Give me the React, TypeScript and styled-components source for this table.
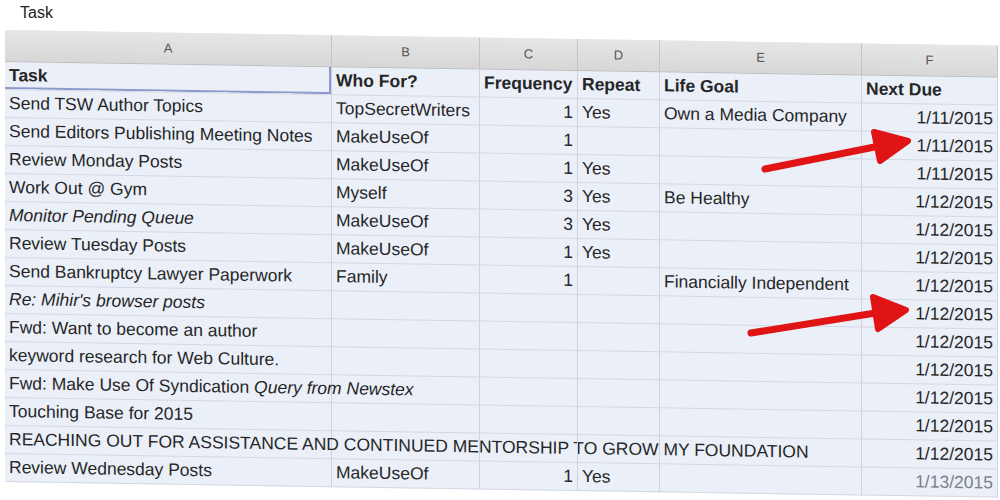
import styled, { createGlobalStyle } from "styled-components";

const GlobalStyle = createGlobalStyle`
  html, body {
    margin: 0;
    background: #fff;
  }
  body {
    font-family: "Liberation Sans", Arial, sans-serif;
    color: #222;
  }
`;

const Page = styled.div`
  position: relative;
  width: 1000px;
  height: 500px;
  overflow: hidden;
  background: #fff;
`;

const FormulaBar = styled.div`
  height: 30px;
  padding-left: 20px;
  font-size: 16px;
  line-height: 25px;
  color: #222;
`;

const Sheet = styled.div`
  margin-left: 5px;
  width: 993px;
  display: grid;
  grid-template-columns: 327px 148px 98px 82px 202px 136px;
  grid-template-rows: 32px;
  grid-auto-rows: 28px;
  background: #eaeff8;
  transform: skewY(0.9deg);
  transform-origin: 0 0;
`;

const ColHead = styled.div`
  display: flex;
  align-items: center;
  justify-content: center;
  font-size: 13px;
  color: #555;
  background: linear-gradient(#e6e6e6, #d7d7d7);
  border-right: 1px solid #c4c4c4;
  border-bottom: 1px solid #bdbdbd;
`;

type CellProps = {
  $align?: "left" | "right";
  $bold?: boolean;
  $italic?: boolean;
  $faded?: boolean;
  $selected?: boolean;
};

const Cell = styled.div<CellProps>`
  display: flex;
  align-items: center;
  justify-content: ${(p) => (p.$align === "right" ? "flex-end" : "flex-start")};
  padding: 0 4px 1px 4px;
  font-size: 17.5px;
  line-height: 1.05;
  font-weight: ${(p) => (p.$bold ? 700 : 400)};
  font-style: ${(p) => (p.$italic ? "italic" : "normal")};
  color: ${(p) => (p.$faded ? "#7b7f88" : "#262626")};
  white-space: nowrap;
  overflow: visible;
  border-right: 1px solid #cdd2dc;
  border-bottom: 1px solid #d3d8e2;
  box-shadow: ${(p) =>
    p.$selected ? "inset -2px -2px 0 #8a9bcb" : "none"};
`;

const Slant = styled.span`
  font-style: italic;
`;

const Arrows = styled.svg`
  position: absolute;
  top: 0;
  left: 0;
  pointer-events: none;
`;

type Row = {
  task: React.ReactNode;
  who?: string;
  freq?: string;
  repeat?: string;
  goal?: string;
  due: string;
  italic?: boolean;
  faded?: boolean;
};

const rows: Row[] = [
  { task: "Send TSW Author Topics", who: "TopSecretWriters", freq: "1", repeat: "Yes", goal: "Own a Media Company", due: "1/11/2015" },
  { task: "Send Editors Publishing Meeting Notes", who: "MakeUseOf", freq: "1", due: "1/11/2015" },
  { task: "Review Monday Posts", who: "MakeUseOf", freq: "1", repeat: "Yes", due: "1/11/2015" },
  { task: "Work Out @ Gym", who: "Myself", freq: "3", repeat: "Yes", goal: "Be Healthy", due: "1/12/2015" },
  { task: "Monitor Pending Queue", who: "MakeUseOf", freq: "3", repeat: "Yes", due: "1/12/2015", italic: true },
  { task: "Review Tuesday Posts", who: "MakeUseOf", freq: "1", repeat: "Yes", due: "1/12/2015" },
  { task: "Send Bankruptcy Lawyer Paperwork", who: "Family", freq: "1", goal: "Financially Independent", due: "1/12/2015" },
  { task: "Re: Mihir's browser posts", due: "1/12/2015", italic: true },
  { task: "Fwd: Want to become an author", due: "1/12/2015" },
  { task: "keyword research for Web Culture.", due: "1/12/2015" },
  {
    task: (
      <span>
        Fwd: Make Use Of Syndication <Slant>Query from Newstex</Slant>
      </span>
    ),
    due: "1/12/2015",
  },
  { task: "Touching Base for 2015", due: "1/12/2015" },
  { task: "REACHING OUT FOR ASSISTANCE AND CONTINUED MENTORSHIP TO GROW MY FOUNDATION", due: "1/12/2015" },
  { task: "Review Wednesday Posts", who: "MakeUseOf", freq: "1", repeat: "Yes", due: "1/13/2015", faded: true },
];

const letters = ["A", "B", "C", "D", "E", "F"];

const RedArrow = ({ from, tip, top, bottom }: { from: [number, number]; tip: [number, number]; top: [number, number]; bottom: [number, number] }) => {
  const base: [number, number] = [(top[0] + bottom[0]) / 2, (top[1] + bottom[1]) / 2];
  return (
    <g stroke="#e01414" strokeLinecap="round" strokeLinejoin="round">
      <line x1={from[0]} y1={from[1]} x2={base[0]} y2={base[1]} strokeWidth={7} />
      <polygon
        points={`${top[0]},${top[1]} ${tip[0]},${tip[1]} ${bottom[0]},${bottom[1]}`}
        fill="#e01414"
        strokeWidth={6}
      />
    </g>
  );
};

export default function App() {
  return (
    <Page>
      <GlobalStyle />
      <FormulaBar>Task</FormulaBar>
      <Sheet>
        {letters.map((l) => (
          <ColHead key={l}>{l}</ColHead>
        ))}
        <Cell $bold $selected>Task</Cell>
        <Cell $bold>Who For?</Cell>
        <Cell $bold>Frequency</Cell>
        <Cell $bold>Repeat</Cell>
        <Cell $bold>Life Goal</Cell>
        <Cell $bold>Next Due</Cell>
        {rows.map((r, i) => (
          <div key={i} style={{ display: "contents" }}>
            <Cell $italic={r.italic}>{r.task}</Cell>
            <Cell>{r.who}</Cell>
            <Cell $align="right">{r.freq}</Cell>
            <Cell>{r.repeat}</Cell>
            <Cell>{r.goal}</Cell>
            <Cell $align="right" $faded={r.faded}>{r.due}</Cell>
          </div>
        ))}
      </Sheet>
      <Arrows width={1000} height={500} viewBox="0 0 1000 500">
        <RedArrow from={[765, 169]} tip={[908, 141]} top={[874, 132]} bottom={[880, 161]} />
        <RedArrow from={[751, 333]} tip={[906, 310]} top={[873, 297]} bottom={[878, 329]} />
      </Arrows>
    </Page>
  );
}
